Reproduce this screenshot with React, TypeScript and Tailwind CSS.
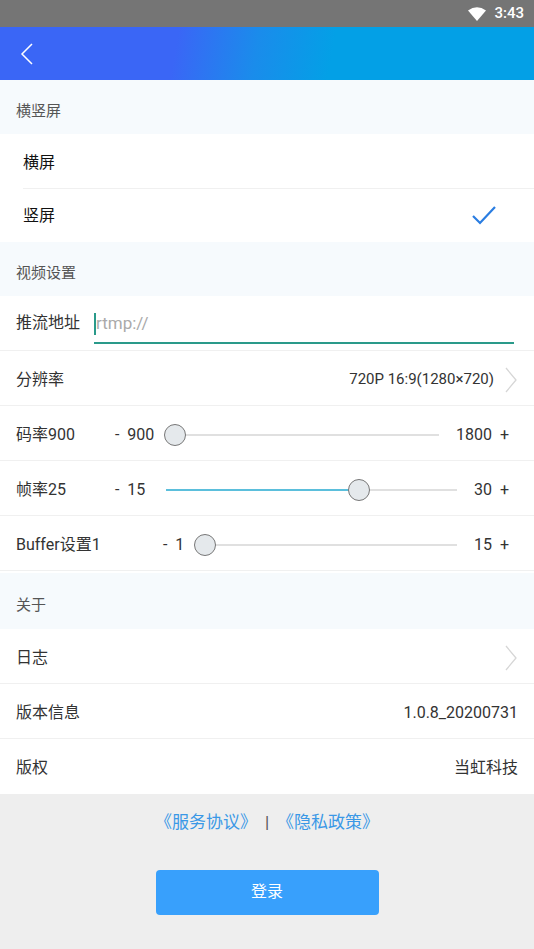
import React from "react";

const font = { fontFamily: '"Roboto", "Noto Sans CJK SC", sans-serif' };

const Chevron = () => (
  <svg width="14" height="26" viewBox="0 0 14 26" className="shrink-0">
    <polyline points="2,1 12,13 2,25" fill="none" stroke="#d6d6d6" strokeWidth="1.3" />
  </svg>
);

const SectionHeader = ({ title, h = "h-[54px]" }: { title: string; h?: string }) => (
  <div className={`${h} bg-[#f6fafd] flex items-center px-4 pt-[9px] text-[15px] text-[#555]`}>{title}</div>
);

const Row = ({ children, border = true, pt = "pt-[3px]" }: { children: React.ReactNode; border?: boolean; pt?: string }) => (
  <div className={`h-[55px] bg-white flex items-center px-4 ${pt} ${border ? "border-b border-[#f0f0f0]" : ""}`}>
    {children}
  </div>
);

interface SliderProps {
  label: string;
  min: string;
  max: string;
  pct: number;
  minW: string;
  labelW: string;
}

const SliderRow = ({ label, min, max, pct, labelW, minW }: SliderProps) => (
  <Row>
    <div className={`${labelW} shrink-0 text-[16px] text-[#333]`}>{label}</div>
    <div className={`${minW} shrink-0 text-[16px] text-[#333] whitespace-pre`}>{`-  ${min}`}</div>
    <div className="flex-1 relative h-[24px] mx-[2px]">
      <div className="absolute left-0 right-0 top-[11px] h-[2px] bg-[#e0e0e0]" />
      <div className="absolute left-0 top-[11px] h-[2px] bg-[#5bbfdc]" style={{ width: `${pct}%` }} />
      <div
        className="absolute top-[1px] w-[22px] h-[22px] rounded-full bg-[#e5e9ec] border border-[#777]"
        style={{ left: `calc(${pct}% - 11px)` }}
      />
    </div>
    <div className="ml-[15px] shrink-0 text-right text-[16px] text-[#333] whitespace-pre pr-[9px]">{`${max}  +`}</div>
  </Row>
);

export default function App() {
  return (
    <div className="w-[534px] h-[949px] bg-[#eeeeee] flex flex-col" style={font}>
      {/* status bar */}
      <div className="h-[27px] bg-[#757575] flex items-center justify-end pr-[10px] gap-[8px] text-white text-[15px]">
        <svg width="18" height="14" viewBox="0 0 18 14">
          <path d="M0 3.5 Q9 -3 18 3.5 L9 14 Z" fill="white" />
        </svg>
        <span className="font-medium">3:43</span>
      </div>
      {/* header */}
      <div
        className="h-[53px] flex items-center pl-[20px]"
        style={{ background: "linear-gradient(100deg, #3a66f6 0%, #3a66f6 33%, #1a8ceb 48%, #03a0e6 62%, #03a0e6 100%)" }}
      >
        <svg width="14" height="24" viewBox="0 0 14 24">
          <polyline points="12,2 2,12 12,22" fill="none" stroke="white" strokeWidth="1.5" />
        </svg>
      </div>

      <SectionHeader title="横竖屏" />
      <div className="bg-white">
        <div className="h-[55px] ml-[23px] pt-[3px] flex items-center border-b border-[#f0f0f0] text-[16px] text-[#111]">横屏</div>
        <div className="h-[53px] ml-[23px] flex items-center justify-between pr-[38px] text-[16px] text-[#111]">
          <span>竖屏</span>
          <svg width="24" height="20" viewBox="0 0 24 20">
            <polyline points="1,10 8,17 23,1" fill="none" stroke="#2a7de1" strokeWidth="2.2" />
          </svg>
        </div>
      </div>

      <SectionHeader title="视频设置" />
      <Row pt="">
        <div className="w-[78px] shrink-0 text-[16px] text-[#333]">推流地址</div>
        <div className="flex-1 h-[38px] flex items-center border-b-2 border-[#2a9a8a] mt-[4px] mr-[4px]">
          <div className="w-[2px] h-[22px] bg-[#2a9a8a]" />
          <span className="text-[17px] text-[#aaa]">rtmp://</span>
        </div>
      </Row>
      <Row>
        <div className="flex-1 text-[16px] text-[#333]">分辨率</div>
        <span className="text-[15px] text-[#333] mr-[10px]">720P 16:9(1280×720)</span>
        <Chevron />
      </Row>
      <SliderRow label="码率900" min="900" max="1800" pct={0} labelW="w-[99px]" minW="w-[58px]" />
      <SliderRow label="帧率25" min="15" max="30" pct={66.3} labelW="w-[99px]" minW="w-[49px]" />
      <SliderRow label="Buffer设置1" min="1" max="15" pct={0} labelW="w-[147px]" minW="w-[40px]" />

      <div className="h-[2px] bg-white" />
      <SectionHeader title="关于" h="h-[56px]" />
      <Row>
        <div className="flex-1 text-[16px] text-[#333]">日志</div>
        <Chevron />
      </Row>
      <Row>
        <div className="flex-1 text-[16px] text-[#333]">版本信息</div>
        <span className="text-[16px] text-[#333]">1.0.8_20200731</span>
      </Row>
      <Row border={false}>
        <div className="flex-1 text-[16px] text-[#333]">版权</div>
        <span className="text-[16px] text-[#333]">当虹科技</span>
      </Row>

      <div className="flex-1 bg-[#eeeeee] flex flex-col items-center">
        <div className="mt-[16px] text-[17px] text-[#3a98e6] flex items-center">
          <span>《服务协议》</span>
          <span className="mx-[8px] text-[#555]">|</span>
          <span>《隐私政策》</span>
        </div>
        <button className="mt-[34px] w-[223px] h-[45px] rounded-[4px] bg-[#38a0fc] text-white text-[16px]">登录</button>
      </div>
    </div>
  );
}
